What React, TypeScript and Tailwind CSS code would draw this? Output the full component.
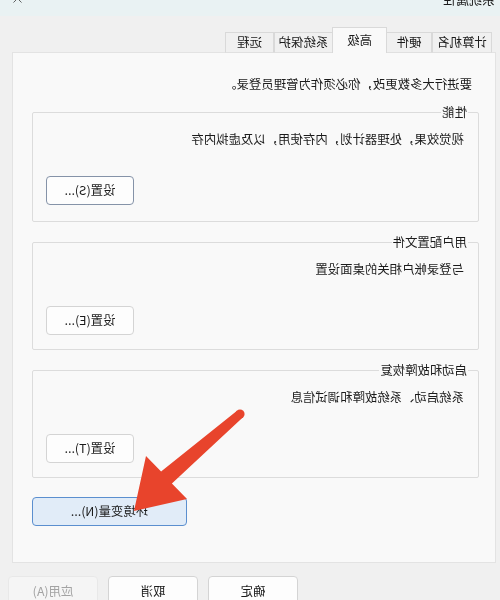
import { X } from 'lucide-react';

const tabs = [
  { label: '计算机名', w: 'w-[60px]' },
  { label: '硬件', w: 'w-[46px]' },
  { label: '高级', w: 'w-[55px]', active: true },
  { label: '系统保护', w: 'w-[59px]' },
  { label: '远程', w: 'w-[49px]' },
];

const groups = [
  { legend: '性能', desc: '视觉效果，处理器计划，内存使用，以及虚拟内存', btn: '设置(S)...', focus: true, h: 'h-[118px]' },
  { legend: '用户配置文件', desc: '与登录帐户相关的桌面设置', btn: '设置(E)...', h: 'h-[116px]' },
  { legend: '启动和故障恢复', desc: '系统启动、系统故障和调试信息', btn: '设置(T)...', h: 'h-[116px]' },
];

function SettingsGroup({ legend, desc, btn, focus, h }: (typeof groups)[number]) {
  return (
    <fieldset className={['border border-[#dcdcdc] rounded-[2px] px-[14px] flex flex-col', h].join(' ')}>
      <legend className="ml-[-4px] px-[1px] leading-[16px]">{legend}</legend>
      <p className="mt-[11px] leading-[16px]">{desc}</p>
      <div className="flex justify-end mt-[29px] -mr-[1px]">
        <button
          className={[
            'w-[88px] h-[29px] rounded-[4px] bg-[#fdfdfd] border',
            focus ? 'border-[#8593a8]' : 'border-[#d4d4d4]',
          ].join(' ')}
        >
          {btn}
        </button>
      </div>
    </fieldset>
  );
}

export default function App() {
  return (
    <div className="relative w-[500px] h-[600px] overflow-hidden bg-[#f0f0f0] text-[12.4px] text-[#1b1b1b] font-['Microsoft_YaHei','Noto_Sans_CJK_SC',sans-serif]">
      <div className="-scale-x-100 h-full flex flex-col">
        {/* title bar */}
        <div className="shrink-0 h-[16px] bg-[#e9f2f3] flex justify-between items-start pl-[5px] pr-[10px] overflow-hidden">
          <span className="-mt-[9px] leading-[16px] text-[13px]">系统属性</span>
          <X className="-mt-[9px] text-[#333]" size={15} strokeWidth={1.2} />
        </div>

        {/* tabs */}
        <div className="shrink-0 flex items-end pl-[8px] mt-[11px] h-[26px] relative z-10">
          {tabs.map((t) => (
            <div
              key={t.label}
              className={[
                'flex items-center justify-center border-t border-x border-[#d9d9d9]',
                t.w,
                t.active
                  ? 'h-[26px] bg-[#f9f9f9] -mx-[1px] relative z-10'
                  : 'h-[21px] bg-[#f0f0f0] border-b border-b-[#e0e0e0]',
              ].join(' ')}
            >
              {t.label}
            </div>
          ))}
        </div>

        {/* panel */}
        <div className="shrink-0 ml-[4px] w-[484px] h-[511px] -mt-[1px] bg-[#f9f9f9] border border-[#e3e3e3] pl-[16px] pr-[19px] pt-[23px] flex flex-col">
          <p className="pl-[7px] leading-[16px] mb-[12px]">要进行大多数更改，你必须作为管理员登录。</p>
          <div className="flex flex-col gap-[12px]">
            {groups.map((g) => (
              <SettingsGroup key={g.legend} {...g} />
            ))}
          </div>
          <div className="flex justify-end mt-[19px]">
            <button className="w-[155px] h-[29px] rounded-[4px] bg-[#e1ecf8] border border-[#5b8fcf]">
              环境变量(N)...
            </button>
          </div>
        </div>

        {/* footer buttons */}
        <div className="shrink-0 flex justify-end gap-[10px] pr-[8px] mt-[13px]">
          <button className="w-[90px] h-[30px] rounded-[4px] bg-[#fdfdfd] border border-[#d4d4d4]">确定</button>
          <button className="w-[90px] h-[30px] rounded-[4px] bg-[#fdfdfd] border border-[#d4d4d4]">取消</button>
          <button className="w-[90px] h-[30px] rounded-[4px] bg-[#f5f5f5] border border-[#e8e8e8] text-[#a3a3a3]">
            应用(A)
          </button>
        </div>
      </div>

      {/* red annotation arrow */}
      <svg className="absolute inset-0 pointer-events-none" width="500" height="600" viewBox="0 0 500 600">
        <polygon
          fill="#e8442c"
          points="237,410.7 161.1,471.6 146,456 134,511 187,499 171.9,483.4 243,417.3"
        />
        <circle cx="240" cy="414" r="4.6" fill="#e8442c" />
      </svg>
    </div>
  );
}
